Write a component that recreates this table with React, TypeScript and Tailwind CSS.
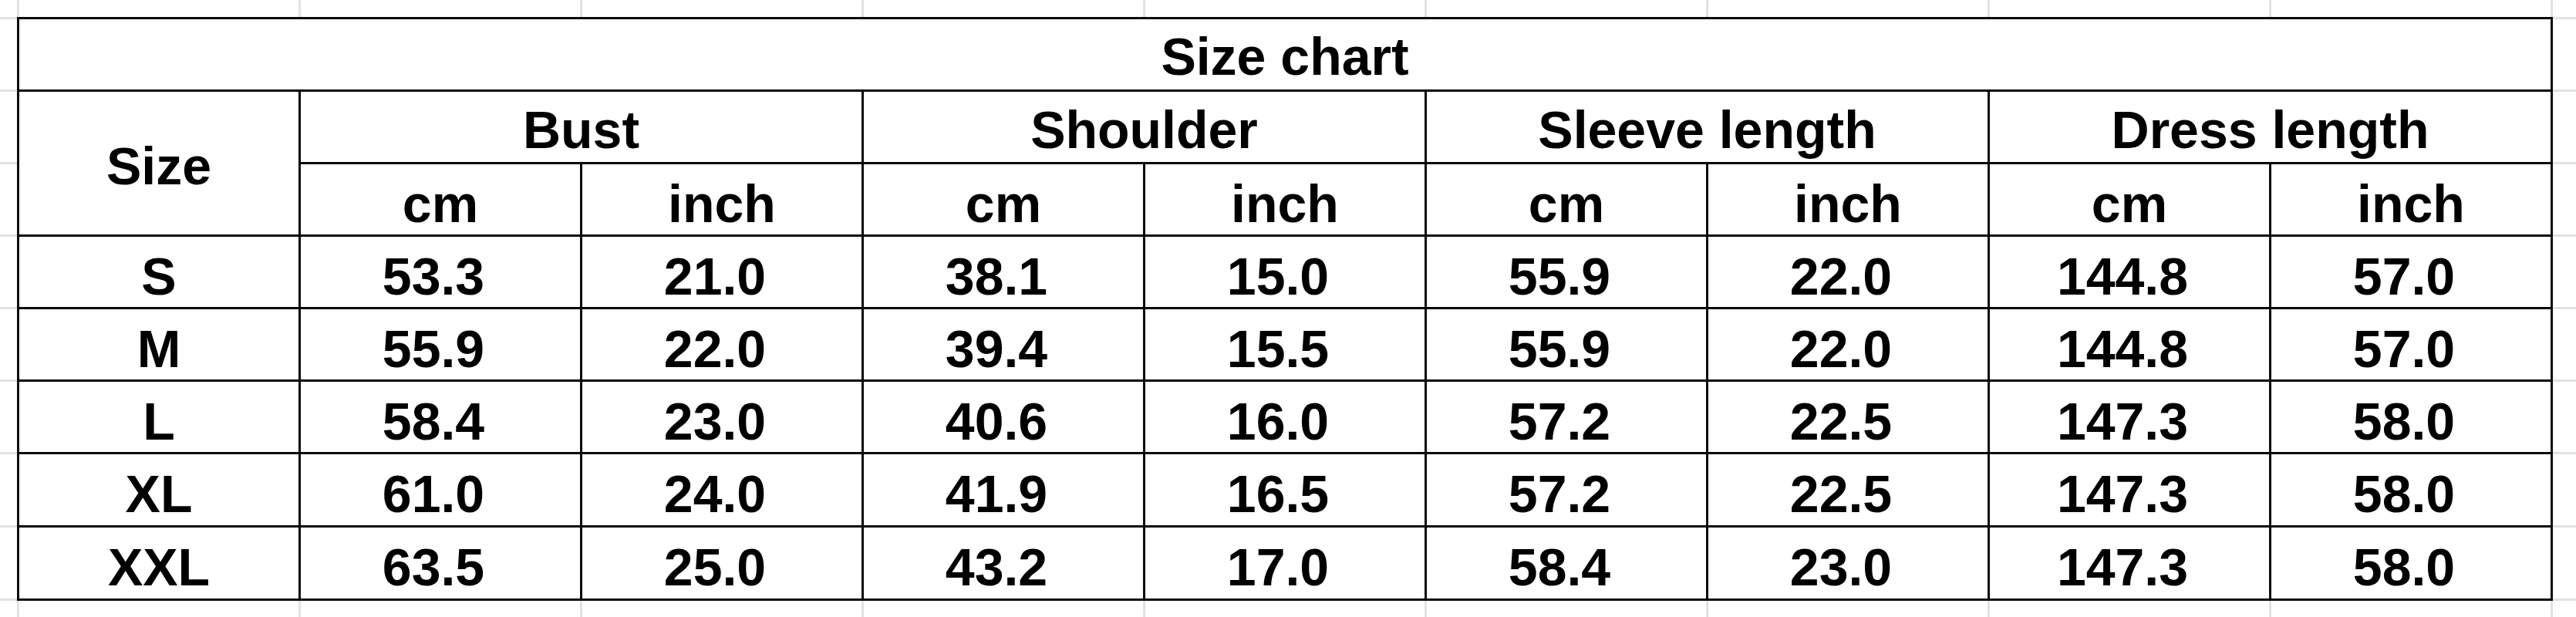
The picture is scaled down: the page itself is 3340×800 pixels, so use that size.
const groups = ["Bust", "Shoulder", "Sleeve length", "Dress length"];

const rows = [
  { size: "S", values: ["53.3", "21.0", "38.1", "15.0", "55.9", "22.0", "144.8", "57.0"] },
  { size: "M", values: ["55.9", "22.0", "39.4", "15.5", "55.9", "22.0", "144.8", "57.0"] },
  { size: "L", values: ["58.4", "23.0", "40.6", "16.0", "57.2", "22.5", "147.3", "58.0"] },
  { size: "XL", values: ["61.0", "24.0", "41.9", "16.5", "57.2", "22.5", "147.3", "58.0"] },
  { size: "XXL", values: ["63.5", "25.0", "43.2", "17.0", "58.4", "23.0", "147.3", "58.0"] },
];

const gridRowHeights = [94, 94, 94, 94, 94, 94, 95, 95];

// faint spreadsheet gridlines above / below the table
function ColumnStrip({ className }: { className: string }) {
  return (
    <div className={"flex " + className}>
      <div className="w-[22px]" />
      {Array.from({ length: 9 }).map((_, i) => (
        <div key={i} className="w-[365px] border-l-[3px] border-[#e2e2e2]" />
      ))}
      <div className="w-[3px] bg-[#e2e2e2]" />
    </div>
  );
}

// faint spreadsheet gridlines left / right of the table
function RowStrip({ className }: { className: string }) {
  return (
    <div className={"flex flex-col " + className}>
      {gridRowHeights.map((h, i) => (
        <div
          key={i}
          className={
            "border-t-[3px] border-[#e2e2e2] " + (h === 94 ? "h-[94px]" : "h-[95px]")
          }
        />
      ))}
      <div className="h-[3px] bg-[#e2e2e2]" />
    </div>
  );
}

export default function App() {
  return (
    <div className="flex h-[800px] w-[3340px] flex-col bg-white font-['Liberation_Sans',Arial,sans-serif] text-[68px] font-bold leading-[68px] text-black">
      <ColumnStrip className="h-[22px]" />
      <div className="flex">
        <RowStrip className="w-[22px]" />
        <div className="grid grid-cols-[repeat(9,362px)] grid-rows-[91px_91px_91px_91px_91px_91px_92px_92px] gap-[3px] bg-[#0a0a0a] p-[3px]">
          {/* title */}
          <div className="col-span-9 flex justify-center bg-white pt-[14px]">Size chart</div>

          {/* group headers */}
          <div className="row-span-2 flex justify-center bg-white pt-[62px]">Size</div>
          {groups.map((g) => (
            <div key={g} className="col-span-2 flex justify-center bg-white pt-[15px]">
              {g}
            </div>
          ))}

          {/* units */}
          {groups.map((g) => (
            <div key={g} className="contents">
              <div className="flex justify-center bg-white pt-[17px]">cm</div>
              <div className="flex justify-center bg-white pt-[17px]">inch</div>
            </div>
          ))}

          {/* data */}
          {rows.map((r) => (
            <div key={r.size} className="contents">
              <div className="flex justify-center bg-white pt-[17px]">{r.size}</div>
              {r.values.map((v, i) => (
                <div key={i} className="flex justify-center bg-white pr-[18px] pt-[17px]">
                  {v}
                </div>
              ))}
            </div>
          ))}
        </div>
        <RowStrip className="flex-1" />
      </div>
      <ColumnStrip className="h-[21px]" />
    </div>
  );
}
